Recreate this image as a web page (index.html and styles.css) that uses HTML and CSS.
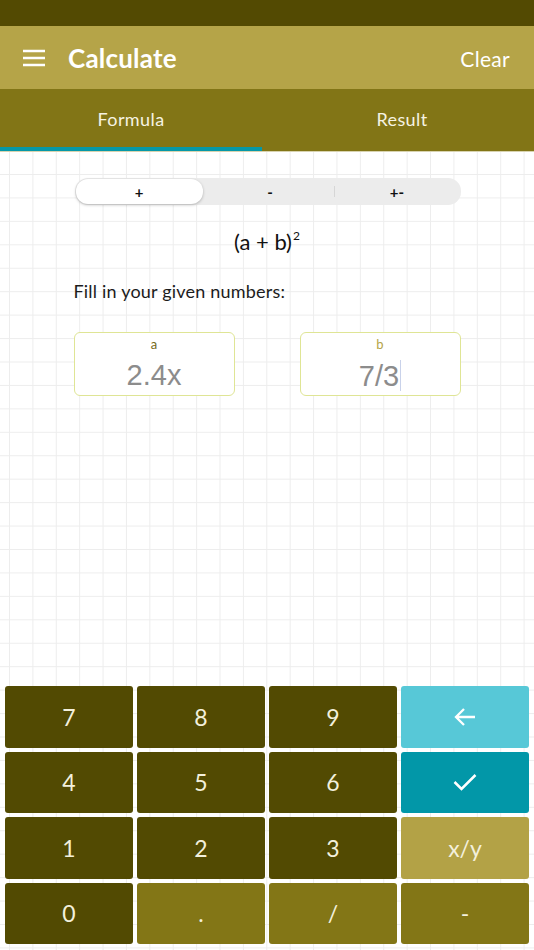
FILE: index.html
```html
<!DOCTYPE html>
<html lang="en">
<head>
    <meta charset="UTF-8">
    <meta name="viewport" content="width=device-width, initial-scale=1.0">
    <title>Calculate</title>
    <link rel="stylesheet" href="styles.css">
</head>
<body>
    <div class="status"></div>
    <div class="appbar">
        <svg class="menu" width="24" height="18" viewBox="0 0 24 18">
            <path d="M1 2h22M1 9h22M1 16h22" stroke="#fff" stroke-width="2.3" fill="none"/>
        </svg>
        <h1 class="title">Calculate</h1>
        <span class="clear">Clear</span>
    </div>
    <div class="tabs">
        <div class="tab active">Formula</div>
        <div class="tab">Result</div>
    </div>
    <div class="main">
        <div class="inner">
            <div class="segment">
                <div class="seg selected">+</div>
                <div class="seg">-</div>
                <div class="seg divided">+-</div>
            </div>
            <div class="formula">(a + b)<sup>2</sup></div>
            <p class="hint">Fill in your given numbers:</p>
            <div class="fields">
                <div class="field">
                    <span class="label">a</span>
                    <span class="value">2.4x</span>
                </div>
                <div class="field">
                    <span class="label label-b">b</span>
                    <span class="value">7/3<i class="caret"></i></span>
                </div>
            </div>
        </div>
        <div class="keypad">
            <div class="key">7</div>
            <div class="key">8</div>
            <div class="key">9</div>
            <div class="key key-back">
                <svg width="22" height="20" viewBox="0 0 22 20">
                    <path d="M21 10H2M10 2L2 10l8 8" stroke="#fff" stroke-width="2.3" fill="none"/>
                </svg>
            </div>
            <div class="key">4</div>
            <div class="key">5</div>
            <div class="key">6</div>
            <div class="key key-ok">
                <svg width="24" height="18" viewBox="0 0 24 18">
                    <path d="M1.5 9l7 7L22.5 2" stroke="#fff" stroke-width="2.5" fill="none"/>
                </svg>
            </div>
            <div class="key">1</div>
            <div class="key">2</div>
            <div class="key">3</div>
            <div class="key key-frac">x/y</div>
            <div class="key">0</div>
            <div class="key key-mid">.</div>
            <div class="key key-mid">/</div>
            <div class="key key-mid">-</div>
        </div>
    </div>
</body>
</html>
```

FILE: styles.css
```css
*{
    margin: 0;
    padding: 0;
    box-sizing: border-box;
}
html,body{
    width: 534px;
    height: 950px;
}
body{
    font-family: Lato, "Open Sans", sans-serif;
    display: flex;
    flex-direction: column;
    background: #fff;
    overflow: hidden;
}
.status{
    height: 26px;
    background-color: #534a02;
}
.appbar{
    height: 63px;
    background-color: #b5a448;
    display: flex;
    align-items: center;
    padding: 0 24px 0 22px;
    color: #fff;
}
.menu{
    display: block;
}
.title{
    font-size: 26px;
    font-weight: 700;
    margin-left: 22px;
    flex: 1;
    letter-spacing: 0.2px;
}
.clear{
    font-size: 21px;
    margin-top: 2px;
    letter-spacing: 0.3px;
}
.tabs{
    height: 63px;
    background-color: #827516;
    display: flex;
    border-bottom: 1px solid #d8d3b0;
}
.tab{
    flex: 1;
    display: flex;
    align-items: center;
    justify-content: center;
    color: #f6f3e2;
    font-size: 18px;
    letter-spacing: 0.4px;
    padding: 0 0 2px 8px;
}
.tab.active{
    flex: 0 0 262px;
    border-bottom: 4px solid #0598a8;
    padding: 2px 0 0;
}
.main{
    flex: 1;
    display: flex;
    flex-direction: column;
    background-color: #fff;
    background-image:
        linear-gradient(to right, #ededed 1px, transparent 1px),
        linear-gradient(to bottom, #ededed 1px, transparent 1px);
    background-size: 23.4px 23.45px;
    background-position: 9px 22px;
}
.inner{
    flex: 1;
    width: 387px;
    margin: 0 auto;
    padding-top: 26px;
}
.segment{
    display: flex;
    height: 27px;
    margin-left: 1px;
    background-color: #ececec;
    border-radius: 13px;
}
.seg{
    flex: 1;
    display: flex;
    align-items: center;
    justify-content: center;
    font-size: 15px;
    font-weight: 700;
    color: #111;
    position: relative;
}
.seg.selected{
    background-color: #fff;
    border-radius: 12px;
    margin: 1px 4px 1px 1px;
    box-shadow: 0 1px 3px rgba(0,0,0,0.25);
}
.seg.divided::before{
    content: "";
    position: absolute;
    left: 0;
    top: 8px;
    height: 11px;
    border-left: 1px solid #d6d6d6;
}
.formula{
    text-align: center;
    font-size: 22px;
    margin-top: 23px;
    color: #111;
}
.formula sup{
    font-size: 12px;
    vertical-align: 10px;
    margin-left: 1px;
}
.hint{
    font-size: 18px;
    letter-spacing: 0.2px;
    color: #1c1c1c;
    margin-top: 25px;
}
.fields{
    display: flex;
    justify-content: space-between;
    margin-top: 30px;
}
.field{
    width: 161px;
    height: 64px;
    border: 1px solid #dfe595;
    border-radius: 6px;
    background-color: #fff;
    display: flex;
    flex-direction: column;
    align-items: center;
}
.label{
    font-size: 13px;
    color: #756818;
    margin-top: 3px;
}
.label-b{
    color: #b5a448;
}
.value{
    font-family: "Liberation Sans", Arial, sans-serif;
    font-size: 29px;
    color: #8c8c8c;
    margin-top: 8px;
    line-height: 30px;
    display: flex;
    align-items: center;
}
.caret{
    display: inline-block;
    width: 1px;
    height: 31px;
    background-color: #c9d2ea;
    margin-left: 1px;
}
.keypad{
    display: grid;
    grid-template-columns: repeat(4, 1fr);
    grid-auto-rows: 61.5px;
    gap: 4px;
    padding: 0 5px 6px;
}
.key{
    background-color: #524a02;
    border-radius: 3px;
    display: flex;
    align-items: center;
    justify-content: center;
    color: #f3f0dc;
    font-size: 23px;
}
.key-back{
    background-color: #57c8d7;
}
.key-ok{
    background-color: #0297a8;
}
.key-frac{
    background-color: #b3a246;
}
.key-mid{
    background-color: #837616;
}
```
